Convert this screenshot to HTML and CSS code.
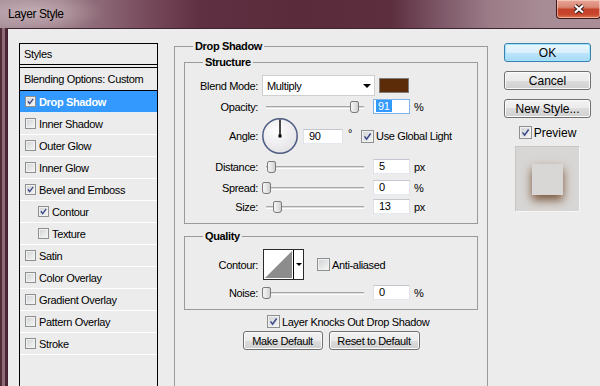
FILE: index.html
```html
<!DOCTYPE html>
<html lang="en"><head><meta charset="utf-8">
<title>Layer Style</title>
<link rel="stylesheet" href="styles.css">
</head>
<body>
<div class="window">
	<div class="titlebar">
		<span class="title">Layer Style</span>
		<div class="close"><svg width="12" height="10" viewBox="0 0 12 10"><path d="M2 1.5L10 8.5M10 1.5L2 8.5" stroke="#3a1d1d" stroke-width="4.2"/><path d="M2 1.5L10 8.5M10 1.5L2 8.5" stroke="#fff" stroke-width="2.2"/></svg></div>
	</div>
	<div class="client">
		<div class="styles">
			<div class="shead">Styles</div>
			<div class="sblend">Blending Options: Custom</div>
			<div class="sitem sel"><span class="cb sm"><svg viewBox="0 0 11 11"><path d="M2.3 5.2L4.5 8.2L8.8 2.2"/></svg></span>Drop Shadow</div>
			<div class="sitem"><span class="cb sm"></span>Inner Shadow</div>
			<div class="sitem"><span class="cb sm"></span>Outer Glow</div>
			<div class="sitem"><span class="cb sm"></span>Inner Glow</div>
			<div class="sitem"><span class="cb sm"><svg viewBox="0 0 11 11"><path d="M2.3 5.2L4.5 8.2L8.8 2.2"/></svg></span>Bevel and Emboss</div>
			<div class="sitem sub"><span class="cb sm"><svg viewBox="0 0 11 11"><path d="M2.3 5.2L4.5 8.2L8.8 2.2"/></svg></span>Contour</div>
			<div class="sitem sub"><span class="cb sm"></span>Texture</div>
			<div class="sitem"><span class="cb sm"></span>Satin</div>
			<div class="sitem"><span class="cb sm"></span>Color Overlay</div>
			<div class="sitem"><span class="cb sm"></span>Gradient Overlay</div>
			<div class="sitem"><span class="cb sm"></span>Pattern Overlay</div>
			<div class="sitem"><span class="cb sm"></span>Stroke</div>
		</div>

		<fieldset class="group ds">
			<legend>Drop Shadow</legend>
			<fieldset class="group st">
				<legend>Structure</legend>
				<div class="row r-blend">
					<span class="lbl">Blend Mode:</span>
					<div class="select">Multiply<span class="arrow"></span></div>
					<span class="swatch"></span>
				</div>
				<div class="row r-opacity">
					<span class="lbl">Opacity:</span>
					<div class="slider"><div class="track"></div><span class="thumb" style="left:88px"></span></div>
					<div class="num focus"><span class="hl">91</span></div>
					<span class="unit">%</span>
				</div>
				<div class="row r-angle">
					<span class="lbl">Angle:</span>
					<svg class="dial" width="36" height="36" viewBox="0 0 36 36">
						<defs><radialGradient id="dg" cx="40%" cy="35%" r="70%"><stop offset="0" stop-color="#fefefe"/><stop offset="1" stop-color="#e2e2e6"/></radialGradient></defs>
						<circle cx="18" cy="18" r="17.2" fill="url(#dg)" stroke="#4d5b82" stroke-width="1.5"/>
						<path d="M18 1.5V18" stroke="#000" stroke-width="1.4"/>
						<rect x="16.5" y="16.5" width="3" height="3" fill="#000"/>
					</svg>
					<div class="num wide">90</div>
					<span class="deg">°</span>
					<span class="cb"><svg viewBox="0 0 13 13"><path d="M3 6.3L5.4 9.6L10.2 3"/></svg></span>
					<span>Use Global Light</span>
				</div>
				<div class="row r-dist">
					<span class="lbl">Distance:</span>
					<div class="slider"><div class="track"></div><span class="thumb" style="left:5px"></span></div>
					<div class="num">5</div>
					<span class="unit">px</span>
				</div>
				<div class="row r-spread">
					<span class="lbl">Spread:</span>
					<div class="slider"><div class="track"></div><span class="thumb" style="left:0px"></span></div>
					<div class="num">0</div>
					<span class="unit">%</span>
				</div>
				<div class="row r-size">
					<span class="lbl">Size:</span>
					<div class="slider"><div class="track"></div><span class="thumb" style="left:11px"></span></div>
					<div class="num">13</div>
					<span class="unit">px</span>
				</div>
			</fieldset>

			<fieldset class="group qu">
				<legend>Quality</legend>
				<div class="row r-contour">
					<span class="lbl">Contour:</span>
					<div class="contour">
						<svg width="29" height="29" viewBox="0 0 29 29"><path d="M1 28L28 1V28Z" fill="#8c8c8c"/></svg>
						<span class="cdrop"><span class="arrow"></span></span>
					</div>
					<span class="cb"></span>
					<span>Anti-aliased</span>
				</div>
				<div class="row r-noise">
					<span class="lbl">Noise:</span>
					<div class="slider"><div class="track"></div><span class="thumb" style="left:0px"></span></div>
					<div class="num">0</div>
					<span class="unit">%</span>
				</div>
			</fieldset>

			<div class="knock"><span class="cb"><svg viewBox="0 0 13 13"><path d="M3 6.3L5.4 9.6L10.2 3"/></svg></span>Layer Knocks Out Drop Shadow</div>
			<div class="btns">
				<button class="btn b-make">Make Default</button>
				<button class="btn b-reset">Reset to Default</button>
			</div>
		</fieldset>

		<div class="actions">
			<button class="btn big default">OK</button>
			<button class="btn big">Cancel</button>
			<button class="btn big">New Style...</button>
			<div class="preview-row"><span class="cb"><svg viewBox="0 0 13 13"><path d="M3 6.3L5.4 9.6L10.2 3"/></svg></span>Preview</div>
			<div class="preview"><div class="pv-square"></div></div>
		</div>
	</div>
</div>
</body>
</html>
```

FILE: styles.css
```css
* {
	box-sizing: border-box;
}
body {
	margin: 0;
	background: #ececec;
	font-family: "Liberation Sans", Arial, sans-serif;
	font-size: 11px;
	letter-spacing: -0.35px;
	color: #000;
}
.window {
	width: 600px;
	height: 386px;
	overflow: hidden;
	display: flex;
	flex-direction: column;
	background: linear-gradient(90deg, #4e2c38 0, #4e2c38 2px, #8d6c76 2px, #8d6c76 5px, #4f2535 5px, #4f2535 7px, #ececec 7px);
}

/* title bar */
.titlebar {
	flex: none;
	height: 28px;
	display: flex;
	align-items: flex-start;
	background:
		radial-gradient(ellipse 70px 20px at 34px 12px, rgba(235, 222, 226, .45), rgba(235, 222, 226, 0)),
		linear-gradient(90deg, #a68c96 0, #9e808b 60px, #76495a 150px, #5f3041 200px, #5a2b3b 300px, #5c2e3e 390px, #7d5767 440px, #9b7c87 490px, #a78b95 545px, #a98d97 600px);
}
.title {
	margin: 7px 0 0 8px;
	font-size: 12px;
	line-height: 14px;
	letter-spacing: -0.4px;
	color: #000;
}
.close {
	margin-left: auto;
	margin-right: -1px;
	width: 45px;
	height: 19px;
	border: 1px solid #3c1818;
	border-top: 0;
	border-radius: 0 0 4px 4px;
	background: linear-gradient(#e7a595 0, #da8774 40%, #c4432b 52%, #c9462c 80%, #de7a57 100%);
	box-shadow: inset 0 0 0 1px rgba(255, 225, 215, .55);
	display: flex;
	align-items: center;
	justify-content: center;
}

/* client area */
.client {
	flex: 1;
	margin-left: 7px;
	border-top: 1px solid #3e2430;
	border-left: 1px solid #3e2430;
	background: #ececec;
	display: flex;
	align-items: flex-start;
	padding: 14px 0 0 11px;
}

/* styles list */
.styles {
	flex: none;
	width: 139px;
	height: 400px;
	border: 1px solid #000;
}
.shead {
	height: 21px;
	line-height: 20px;
	padding-left: 4px;
	border-bottom: 1px solid #000;
}
.sblend {
	margin-top: 2px;
	height: 24px;
	line-height: 22px;
	padding-left: 4px;
	border-top: 1px solid #000;
	border-bottom: 1px solid #000;
}
.sitem {
	height: 22px;
	display: flex;
	align-items: center;
	padding-left: 5px;
	border-bottom: 1px solid #fff;
}
.sitem.sub {
	padding-left: 18px;
}
.sitem.sel {
	background: #3399ff;
	color: #fff;
	font-weight: bold;
	border-bottom-color: #e4eefa;
}

/* checkbox */
.cb {
	flex: none;
	display: inline-block;
	width: 13px;
	height: 13px;
	margin-right: 2px;
	border: 1px solid #8e8f8f;
	background: linear-gradient(135deg, #cfd1d4, #f7f7f7);
	box-shadow: inset 0 0 0 1px #f1f1f1;
}
.cb svg {
	display: block;
	width: 100%;
	height: 100%;
}
.cb path {
	fill: none;
	stroke: #3b4a8a;
	stroke-width: 1.8;
}
.cb.sm {
	width: 11px;
	height: 11px;
	margin-right: 3px;
}
.cb.sm path {
	stroke-width: 1.6;
}

/* group boxes */
fieldset.group {
	margin: 0;
	padding: 0;
	min-width: 0;
	border: 1px solid #9a9a9a;
}
fieldset.group legend {
	margin-left: 18px;
	padding: 0 2px;
	font-weight: bold;
	line-height: 14px;
}
fieldset.ds {
	flex: none;
	width: 314px;
	height: 400px;
	margin: -4px 0 0 16px;
	padding: 2px 0 0;
}
fieldset.st {
	margin: 0 9px;
	padding: 6px 0 9px;
}
fieldset.qu {
	margin: 5px 9px 0;
	padding: 6px 0 9px;
}

.row {
	display: flex;
	align-items: center;
	height: 15px;
}
.lbl {
	flex: none;
	width: 73px;
	text-align: right;
}
.r-blend {
	height: 21px;
}
.r-opacity {
	margin-top: 3px;
}
.r-angle {
	margin-top: 4px;
	height: 36px;
}
.r-dist {
	margin-top: 5px;
}
.r-spread {
	margin-top: 6px;
}
.r-size {
	margin-top: 4px;
}
.r-contour {
	height: 31px;
}
.r-noise {
	margin-top: 5px;
}

.select {
	width: 113px;
	height: 21px;
	margin-left: 4px;
	padding-left: 4px;
	display: flex;
	align-items: center;
	background: #fff;
	border: 1px solid #cfcfcf;
}
.arrow {
	width: 0;
	height: 0;
	margin-left: auto;
	margin-right: 3px;
	border-left: 4px solid transparent;
	border-right: 4px solid transparent;
	border-top: 4px solid #000;
}
.swatch {
	width: 30px;
	height: 15px;
	margin-left: 4px;
	background: #5b2c07;
	border: 1px solid #7d7d7d;
}

.slider {
	position: relative;
	flex: none;
	width: 106px;
	height: 15px;
	margin-left: 4px;
}
.track {
	margin: 7px 4px 0;
	height: 3px;
	border-top: 1px solid #a8a8a8;
	border-bottom: 1px solid #fff;
	background: #dadada;
}
.thumb {
	position: absolute;
	top: 2px;
	width: 9px;
	height: 12px;
	border: 1px solid #7a7a7a;
	border-radius: 2px 2px 3px 3px;
	background: linear-gradient(90deg, #f6f6f6, #e2e2e2 60%, #cfcfcf);
}

.num {
	flex: none;
	width: 37px;
	height: 15px;
	margin-left: 5px;
	padding-left: 5px;
	line-height: 13px;
	background: #fff;
	border: 1px solid;
	border-color: #c4c7cf #e2e3ea #e3e9ef #dde0e7;
}
.num.focus {
	padding-left: 2px;
	border-color: #7eb4ea;
}
.num.wide {
	width: 40px;
	margin-left: 5px;
}
.hl {
	padding: 0 2px;
	background: #3399ff;
	color: #fff;
}
.unit {
	margin-left: 4px;
}
.dial {
	flex: none;
	margin-left: 4px;
}
.deg {
	margin: -6px 9px 0 5px;
}

.contour {
	flex: none;
	display: flex;
	width: 41px;
	height: 31px;
	margin: 0 13px 0 5px;
	border: 1px solid #2a2a2a;
	background: #fff;
}
.contour svg {
	display: block;
}
.cdrop {
	flex: 1;
	display: flex;
	align-items: center;
	border-left: 1px solid #000;
}
.cdrop .arrow {
	margin: 0 auto;
	border-left-width: 3px;
	border-right-width: 3px;
	border-top-width: 3px;
}

.knock {
	display: flex;
	align-items: center;
	height: 13px;
	margin: 5px 0 0 92px;
}
.btns {
	display: flex;
	justify-content: center;
	gap: 6px;
	margin-top: 3px;
}

/* buttons */
.btn {
	height: 19px;
	padding: 0;
	font-family: "Liberation Sans", Arial, sans-serif;
	font-size: 11px;
	letter-spacing: -0.35px;
	color: #000;
	border: 1px solid #707070;
	border-radius: 3px;
	background: linear-gradient(#f2f2f2 0, #ebebeb 50%, #dddddd 50%, #cfcfcf 100%);
	box-shadow: inset 0 0 0 1px #fbfbfb;
}
.b-make {
	width: 80px;
}
.b-reset {
	width: 91px;
}
.actions {
	flex: none;
	width: 87px;
	margin-left: 16px;
	display: flex;
	flex-direction: column;
	align-items: center;
	letter-spacing: 0;
}
.btn.big {
	width: 87px;
	font-size: 12px;
	letter-spacing: 0;
	margin-top: 9px;
}
.btn.default {
	margin-top: 0;
	border-color: #3c7fb1;
	background: linear-gradient(#eaf6fd 0, #d9f0fc 50%, #bee6fd 50%, #a7d9f5 100%);
	box-shadow: inset 0 0 0 1px #9ee6fb;
}
.preview-row {
	display: flex;
	align-items: center;
	height: 13px;
	margin-top: 8px;
	font-size: 12px;
}
.preview {
	width: 65px;
	height: 66px;
	margin-top: 7px;
	display: flex;
	align-items: center;
	justify-content: center;
	background: #d8d6d4;
	border: 1px solid;
	border-color: #c6c6c6 #f6f6f6 #f6f6f6 #c6c6c6;
}
.pv-square {
	width: 31px;
	height: 31px;
	background: #d9d7d5;
	box-shadow: 0 5px 9px rgba(92, 44, 8, .75);
}
```
